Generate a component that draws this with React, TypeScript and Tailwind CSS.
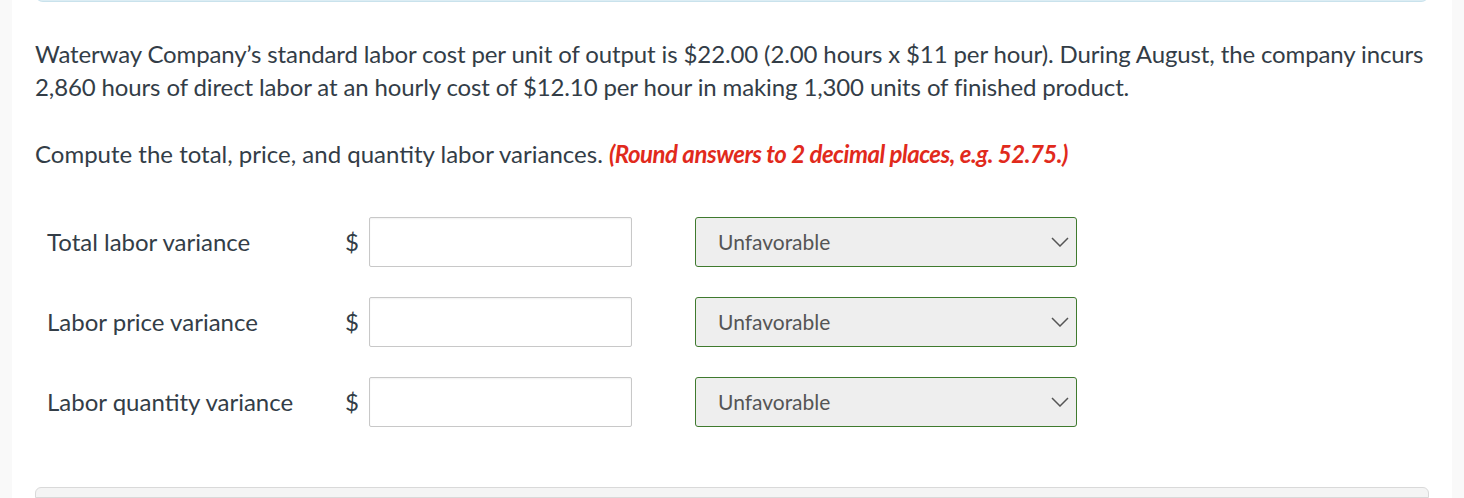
export default function App() {
  const rows = ['Total labor variance', 'Labor price variance', 'Labor quantity variance']
  return (
    <div className="w-[1464px] h-[498px] overflow-hidden bg-[#f9f9f9] flex justify-center" style={{ fontFamily: 'Lato, "Noto Sans", sans-serif' }}>
      <div className="w-[1440px] bg-white px-[23px] flex flex-col">
        {/* tail of the previous panel */}
        <div className="h-[4px] -mt-[10px] pt-[10px] box-content rounded-b-lg border border-t-0 border-[#c9e2ec] bg-[#dcedf4]" />
        <div className="-mr-[16px] text-[24px] leading-[33px] text-[#333d47]">
          <p className="mt-[35px] tracking-[-0.005em]">
            Waterway Company’s standard labor cost per unit of output is $22.00 (2.00 hours x $11 per hour). During August, the company incurs 2,860 hours of direct labor at an hourly cost of $12.10 per hour in making 1,300 units of finished product.
          </p>
          <p className="mt-[34px]">
            Compute the total, price, and quantity labor variances.{' '}
            <span className="font-bold italic text-[#e12a1c] tracking-[-0.02em]">(Round answers to 2 decimal places, e.g. 52.75.)</span>
          </p>
        </div>
        <div className="mt-[47px] flex flex-col gap-[30px] pl-[12px]">
          {rows.map((r) => (
            <div key={r} className="flex items-center h-[50px]">
              <div className="w-[298px] text-[24px] text-[#333d47]">{r}</div>
              <div className="w-[24px] text-[24px] text-[#333d47]">$</div>
              <div className="w-[263px] h-[50px] border border-[#c8c8c8] rounded-[2px] bg-white shadow-[inset_0_1px_2px_rgba(0,0,0,0.06)]" />
              <div className="ml-[63px] w-[382px] h-[50px] border border-[#3f7a2e] rounded-[3px] bg-[#eeeeee] flex items-center justify-between pl-[22px] pr-[7px]">
                <span className="text-[21px] text-[#555555]">Unfavorable</span>
                <svg width="18" height="10" viewBox="0 0 18 10" fill="none" stroke="#555" strokeWidth="1.5">
                  <path d="M1 1l8 8 8-8" />
                </svg>
              </div>
            </div>
          ))}
        </div>
        <div className="mt-[60px] h-[40px] rounded-t-md border border-[#d9d9d9] bg-[#f4f4f4]" />
      </div>
    </div>
  )
}
